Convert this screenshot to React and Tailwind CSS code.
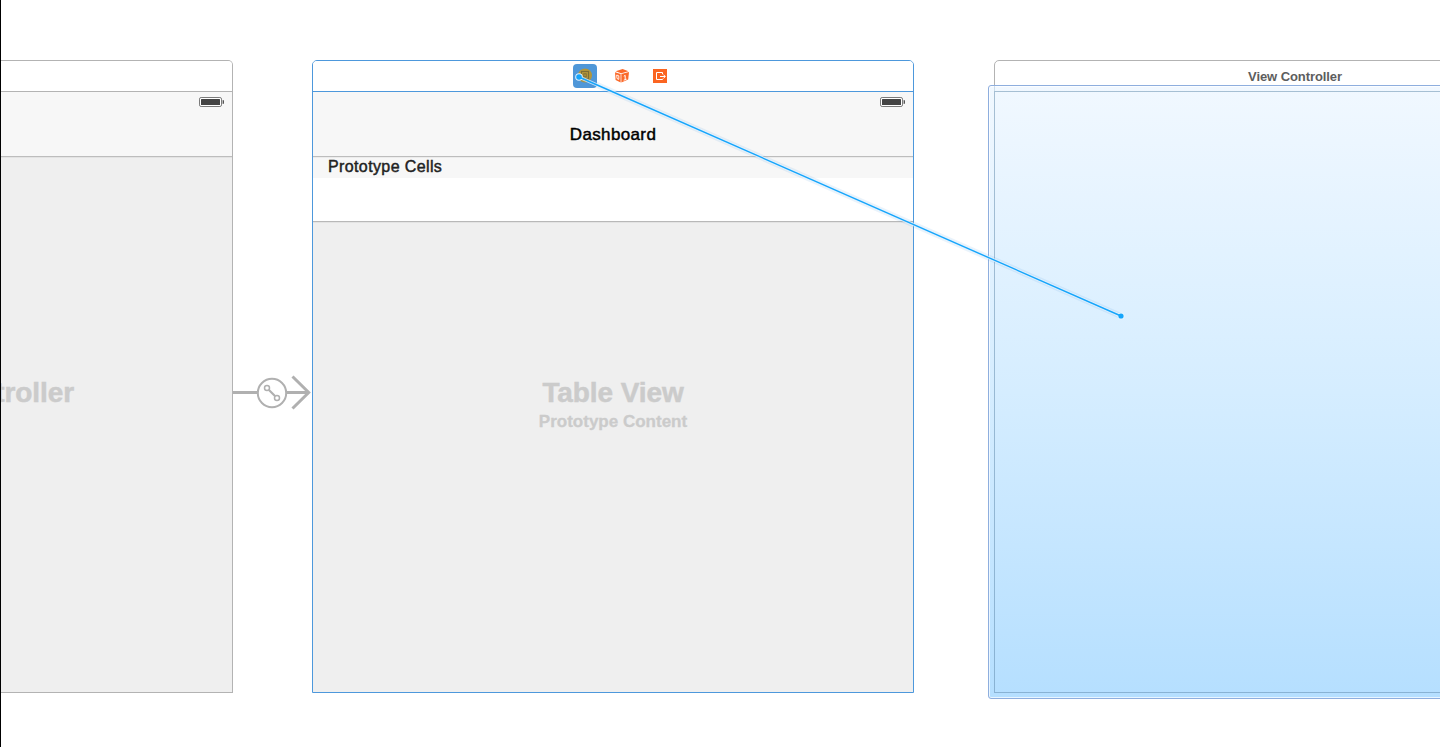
function Battery() {
  return (
    <svg className="block h-[10px] w-[26px]" viewBox="0 0 26 10">
      <rect x="0.5" y="0.5" width="22" height="9" rx="1.6" fill="#fff" stroke="#7a7a7a" />
      <rect x="2" y="2" width="19" height="6" rx="0.6" fill="#444" />
      <path d="M23.6 3H24a1 1 0 0 1 1 1v2a1 1 0 0 1-1 1h-.4z" fill="#555" />
    </svg>
  );
}

function NavBar({ title }) {
  return (
    <div className="flex h-[65px] shrink-0 flex-col border-b border-[#bdbdbd] bg-[#f7f7f7]">
      <div className="flex h-[20px] items-start justify-end pt-[5px] pr-[7px]">
        <Battery />
      </div>
      <div className="flex h-[44px] items-center justify-center pt-0.5">
        <span className="text-[17px] leading-5 tracking-[0.36px] text-black [-webkit-text-stroke:0.45px_#000]">{title}</span>
      </div>
    </div>
  );
}

function Segue() {
  return (
    <svg className="block h-[40px] w-[79px]" viewBox="0 0 79 40" fill="none" stroke="#b0b0b0">
      <path d="M0 19.5H25M54 19.5H75" strokeWidth="3" />
      <path d="M59.5 3.5L75.7 19.5L59.5 35.5" strokeWidth="3" />
      <circle cx="39" cy="20" r="14.2" strokeWidth="2" fill="#fff" />
      <path d="M36 17L42 23" strokeWidth="2.2" />
      <circle cx="34" cy="15" r="2.5" strokeWidth="1.5" />
      <circle cx="44" cy="25" r="2.5" strokeWidth="1.5" />
    </svg>
  );
}

function ControllerIcon() {
  return (
    <div className="flex h-6 w-6 items-center justify-center rounded-[4px] bg-[#4f97d8]">
      <svg className="block h-6 w-6" viewBox="0 0 24 24" fill="none">
        <circle cx="12" cy="11.5" r="7" fill="#b3963a" />
        <rect x="8.5" y="7.5" width="7" height="7.5" stroke="#7c6c34" strokeWidth="1.1" />
        <rect x="10.8" y="9.8" width="2.4" height="3" stroke="#7c6c34" strokeWidth="0.9" />
      </svg>
    </div>
  );
}

function ResponderIcon() {
  return (
    <svg className="block h-[16px] w-[16px]" viewBox="0 0 16 16" fill="none">
      <path d="M8.6 1.1L14.4 3.2L7.2 5.3L1.6 3.3Z" fill="#fb6a2b" />
      <path d="M1 4.2L6.6 6.1V14.5L1.6 11.9Z" fill="#fb6a2b" />
      <path d="M7.4 6.1L15 4.1L14.2 11.6L7.4 14.5Z" fill="#fb6a2b" />
      <path d="M2.7 7L4.8 7.8V11.4L3 10.5Z" stroke="#fff" strokeWidth="0.9" />
      <path d="M9.8 8.2L11.2 7.4V11.7M9.7 12.2L12.6 11.2" stroke="#fff" strokeWidth="1" />
    </svg>
  );
}

function ExitIcon() {
  return (
    <svg className="block h-[14px] w-[14px]" viewBox="0 0 14 14" fill="none">
      <rect width="14" height="14" fill="#fb6521" />
      <path d="M9.5 5.2V3.5H3.5V10.5H9.5V9.8M7 7.5H12.2M10.4 5.6L12.3 7.5L10.4 9.4" stroke="#fff" strokeWidth="1" />
    </svg>
  );
}

export default function App() {
  return (
    <main className="relative h-[747px] w-[1440px] overflow-hidden border-l border-black bg-white font-['Liberation_Sans',Arial,sans-serif]">
      <div className="flex items-start pt-[60px]">
        <section className="flex h-[633px] w-[232px] shrink-0 flex-col overflow-hidden rounded-tr-[5px] border border-l-0 border-[#b3b3b3] bg-[#efefef]">
          <header className="h-[31px] shrink-0 border-b border-[#b3b3b3] bg-white" />
          <NavBar title="" />
          <div className="h-px shrink-0 bg-[#e3e3e3]" />
          <div className="flex justify-end pt-[219px] pr-[158px]">
            <span className="whitespace-nowrap text-[28px] leading-8 font-bold tracking-[-0.1px] text-[#cbcbcb] [-webkit-text-stroke:0.5px_#cbcbcb]">Table View Controller</span>
          </div>
        </section>

        <div className="w-[79px] shrink-0 pt-[313px]">
          <Segue />
        </div>

        <section className="flex h-[633px] w-[602px] shrink-0 flex-col overflow-hidden rounded-t-[5px] border border-[#4d98dc] bg-[#efefef]">
          <header className="flex h-[31px] shrink-0 items-center border-b border-[#4d98dc] bg-white pl-[260px]">
            <ControllerIcon />
            <div className="ml-[17px]">
              <ResponderIcon />
            </div>
            <div className="ml-[23px]">
              <ExitIcon />
            </div>
          </header>
          <NavBar title="Dashboard" />
          <div className="flex h-[21px] shrink-0 items-start border-t border-[#ececec] bg-[#f7f7f7] pl-[15px]">
            <span className="-mt-px text-[16px] leading-5 tracking-[0.38px] text-[#222] [-webkit-text-stroke:0.45px_#222]">Prototype Cells</span>
          </div>
          <div className="h-[44px] shrink-0 border-b border-[#b8b8b8] bg-white" />
          <div className="h-px shrink-0 bg-[#e3e3e3]" />
          <div className="flex flex-col items-center pt-[154px] text-[#cbcbcb]">
            <span className="text-[28px] leading-8 font-bold tracking-[-0.1px] [-webkit-text-stroke:0.5px_#cbcbcb]">Table View</span>
            <span className="mt-[3px] text-[17px] leading-5 font-bold [-webkit-text-stroke:0.3px_#cbcbcb]">Prototype Content</span>
          </div>
        </section>

        <section className="ml-[80px] flex h-[633px] w-[602px] shrink-0 flex-col rounded-t-[5px] border border-[#b3b3b3] bg-white">
          <header className="flex h-[31px] shrink-0 items-center justify-center border-b border-[#b3b3b3] pt-px">
            <span className="text-[13px] leading-4 font-bold tracking-[-0.08px] text-[#5d5d5d]">View Controller</span>
          </header>
        </section>
      </div>

      <div className="absolute top-[85px] left-[987px] h-[614px] w-[614px] rounded-[3px] border border-[#8eaede] bg-linear-to-b from-[#f1f8ff] via-[#d5edff] to-[#b5dfff] shadow-[inset_0_0_0_1px_#ffffffb0]">
        <div className="mt-[5px] ml-[5px] h-[602px] w-[602px] border border-[#5b86a880]" />
        <div className="absolute top-0 left-[5px] h-[5px] w-px bg-[#5b86a840]" />
      </div>

      <svg className="absolute top-0 left-0 h-[747px] w-[1439px]" viewBox="1 0 1439 747" fill="none">
        <path d="M579 77L1121 316" stroke="#3389dc" strokeOpacity="0.1" strokeWidth="6" />
        <path d="M579 77L1121 316" stroke="#e5f3ff" strokeOpacity="0.8" strokeWidth="3.2" />
        <circle cx="579" cy="77" r="3.8" fill="#dff1ff" />
        <circle cx="1121" cy="316" r="3.5" fill="#e5f5ff" />
        <path d="M579 77L1121 316" stroke="#15a5fb" strokeWidth="1.4" />
        <circle cx="579" cy="77" r="2.8" fill="#15a5fb" />
        <circle cx="1121" cy="316" r="2.6" fill="#15a5fb" />
      </svg>
    </main>
  );
}
